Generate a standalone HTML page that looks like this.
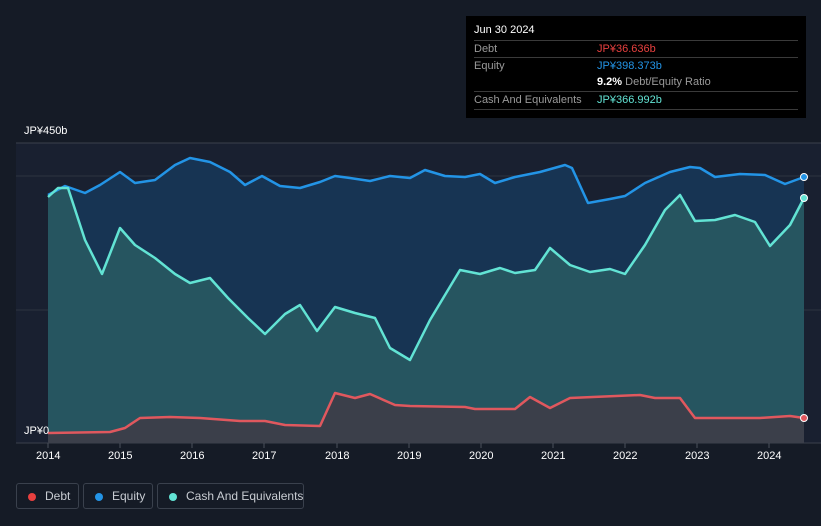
<!DOCTYPE html><html><head><meta charset="utf-8"><style>
body{margin:0;background:#151b26;width:821px;height:526px;overflow:hidden;font-family:"Liberation Sans",sans-serif;position:relative}
.tip{position:absolute;left:466px;top:16px;width:340px;height:102px;background:#000;color:#fff;font-size:11px}
.tip .r{position:absolute;left:8px;width:324px;border-top:1px solid #3a3a3a;height:17px;line-height:17px;color:#9a9a9a}
.tip .v{position:absolute;left:123px}
.ax{position:absolute;color:#fff;font-size:11px}
.lg{position:absolute;top:483px;height:26px;border:1px solid #3a414d;border-radius:3px;color:#c8ccd2;font-size:12px;line-height:25px;box-sizing:border-box;white-space:nowrap}
.lg i{position:absolute;left:11px;top:9px;width:8px;height:8px;border-radius:50%}
</style></head><body>
<svg width="821" height="526" style="position:absolute;left:0;top:0">
<rect x="16" y="143" width="805" height="300" fill="#192030"/>
<line x1="16" y1="143" x2="821" y2="143" stroke="#3a404c"/>
<line x1="16" y1="176" x2="821" y2="176" stroke="#2d3440"/>
<line x1="16" y1="310" x2="821" y2="310" stroke="#2d3440"/>
<line x1="16" y1="443" x2="821" y2="443" stroke="#3a404c"/>
<path d="M48,195 L65,186 85,193 100,185 120,172 135,183 155,180 175,165 190,158 210,162 230,172 245,185 262,176 280,186 300,188 320,182 335,176 350,178 370,181 390,176 410,178 425,170 445,176 465,177 480,174 495,183 515,177 540,172 565,165 572,168 588,203 610,199 625,196 645,183 670,172 690,167 700,168 715,177 740,174 765,175 785,184 804,177 L804,443 48,443Z" fill="#173453"/>
<path d="M48,197 L58,188 68,188 85,240 102,274 120,228 135,245 155,258 175,274 190,283 210,278 228,298 248,318 265,334 285,314 300,305 317,331 335,307 355,313 375,318 390,348 410,360 430,320 445,295 460,270 480,274 500,268 515,273 535,270 550,248 570,265 590,272 610,269 625,274 645,245 665,210 680,195 695,221 715,220 735,215 755,222 770,246 790,225 804,198 L804,443 48,443Z" fill="#265560"/>
<path d="M48,433 L110,432 125,428 140,418 170,417 200,418 240,421 265,421 285,425 320,426 335,393 355,398 370,394 395,405 410,406 465,407 475,409 515,409 530,397 550,408 570,398 640,395 655,398 680,398 695,418 760,418 790,416 804,418 L804,443 48,443Z" fill="#3b3f4a"/>
<path d="M48,195 L65,186 85,193 100,185 120,172 135,183 155,180 175,165 190,158 210,162 230,172 245,185 262,176 280,186 300,188 320,182 335,176 350,178 370,181 390,176 410,178 425,170 445,176 465,177 480,174 495,183 515,177 540,172 565,165 572,168 588,203 610,199 625,196 645,183 670,172 690,167 700,168 715,177 740,174 765,175 785,184 804,177" fill="none" stroke="#2394e6" stroke-width="2.5" stroke-linejoin="round"/>
<path d="M48,197 L58,188 68,188 85,240 102,274 120,228 135,245 155,258 175,274 190,283 210,278 228,298 248,318 265,334 285,314 300,305 317,331 335,307 355,313 375,318 390,348 410,360 430,320 445,295 460,270 480,274 500,268 515,273 535,270 550,248 570,265 590,272 610,269 625,274 645,245 665,210 680,195 695,221 715,220 735,215 755,222 770,246 790,225 804,198" fill="none" stroke="#62e3d4" stroke-width="2.5" stroke-linejoin="round"/>
<path d="M48,433 L110,432 125,428 140,418 170,417 200,418 240,421 265,421 285,425 320,426 335,393 355,398 370,394 395,405 410,406 465,407 475,409 515,409 530,397 550,408 570,398 640,395 655,398 680,398 695,418 760,418 790,416 804,418" fill="none" stroke="#e0585e" stroke-width="2.5" stroke-linejoin="round"/>
<circle cx="804" cy="177" r="3.5" fill="#2394e6" stroke="#fff" stroke-width="1"/>
<circle cx="804" cy="198" r="3.5" fill="#62e3d4" stroke="#fff" stroke-width="1"/>
<circle cx="804" cy="418" r="3.5" fill="#e0585e" stroke="#fff" stroke-width="1"/>
<g stroke="#4a505c"><line x1="48" y1="443" x2="48" y2="448"/><line x1="120" y1="443" x2="120" y2="448"/><line x1="192" y1="443" x2="192" y2="448"/><line x1="264" y1="443" x2="264" y2="448"/><line x1="337" y1="443" x2="337" y2="448"/><line x1="409" y1="443" x2="409" y2="448"/><line x1="481" y1="443" x2="481" y2="448"/><line x1="553" y1="443" x2="553" y2="448"/><line x1="625" y1="443" x2="625" y2="448"/><line x1="697" y1="443" x2="697" y2="448"/><line x1="769" y1="443" x2="769" y2="448"/></g>
</svg>
<div class="ax" style="left:24px;top:125px">JP¥450b</div>
<div class="ax" style="left:24px;top:425px">JP¥0</div>
<div class="ax" style="left:36px;top:450px">2014</div><div class="ax" style="left:108px;top:450px">2015</div><div class="ax" style="left:180px;top:450px">2016</div><div class="ax" style="left:252px;top:450px">2017</div><div class="ax" style="left:325px;top:450px">2018</div><div class="ax" style="left:397px;top:450px">2019</div><div class="ax" style="left:469px;top:450px">2020</div><div class="ax" style="left:541px;top:450px">2021</div><div class="ax" style="left:613px;top:450px">2022</div><div class="ax" style="left:685px;top:450px">2023</div><div class="ax" style="left:757px;top:450px">2024</div>
<div class="tip">
<div style="position:absolute;left:8px;top:8px">Jun 30 2024</div>
<div class="r" style="top:24px">Debt<span class="v" style="color:#e8403f">JP¥36.636b</span></div>
<div class="r" style="top:41px">Equity<span class="v" style="color:#2394e6">JP¥398.373b</span></div>
<div class="r" style="top:58px;border:none"><span class="v"><b style="color:#fff">9.2%</b> Debt/Equity Ratio</span></div>
<div class="r" style="top:75px">Cash And Equivalents<span class="v" style="color:#62e3d4">JP¥366.992b</span></div>
<div class="r" style="top:93px;height:0"></div>
</div>
<div class="lg" style="left:16px;width:63px;padding-left:28px"><i style="background:#e8403f"></i>Debt</div>
<div class="lg" style="left:83px;width:70px;padding-left:28px"><i style="background:#2394e6"></i>Equity</div>
<div class="lg" style="left:157px;width:147px;padding-left:28px"><i style="background:#62e3d4"></i>Cash And Equivalents</div>
</body></html>
